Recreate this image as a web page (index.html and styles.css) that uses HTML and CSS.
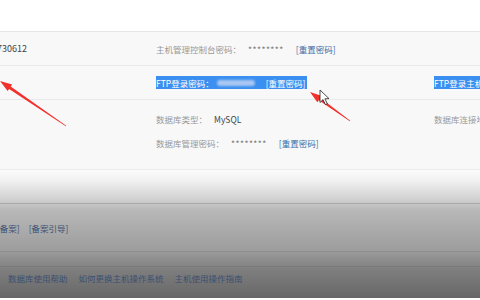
FILE: index.html
```html
<!DOCTYPE html>
<html lang="zh-CN">
<head>
    <meta charset="UTF-8">
    <title>主机管理</title>
    <link rel="stylesheet" href="styles.css">
</head>
<body>
    <div class="top-space"></div>
    <div class="info-table">
        <div class="info-row row-one">
            <div class="cell first"><span class="value cut">730612</span></div>
            <div class="cell">
                <span class="label">主机管理控制台密码：</span><span class="value stars">********</span><a class="link">[重置密码]</a>
            </div>
            <div class="cell"></div>
        </div>
        <div class="info-row row-two">
            <div class="cell first"></div>
            <div class="cell">
                <span class="selected">FTP登录密码：<span class="blurred"></span><span class="sel-link">[重置密码]</span></span>
            </div>
            <div class="cell"><span class="selected">FTP登录主机地址</span></div>
        </div>
        <div class="info-row row-three">
            <div class="cell first"></div>
            <div class="cell stack">
                <div class="line"><span class="label">数据库类型：</span><span class="value">MySQL</span></div>
                <div class="line"><span class="label">数据库管理密码：</span><span class="value stars">********</span><a class="link">[重置密码]</a></div>
            </div>
            <div class="cell stack">
                <div class="line"><span class="label">数据库连接地址：</span></div>
            </div>
        </div>
    </div>
    <div class="footer">
        <div class="foot-gap"></div>
        <div class="foot-row beian">
            <a class="foot-link cut">[备案]</a><a class="foot-link">[备案引导]</a>
        </div>
        <div class="foot-thin"></div>
        <div class="foot-row help">
            <a class="foot-link">数据库使用帮助</a>
            <a class="foot-link">如何更换主机操作系统</a>
            <a class="foot-link">主机使用操作指南</a>
        </div>
    </div>

    <svg class="marks" viewBox="0 0 480 300" width="480" height="300">
        <polygon fill="#f2302c" points="0,81 12.2,84.5 10.7,86.6 66.2,125.7 65.8,126.3 9.1,89 7.6,91.1"/>
        <polygon fill="#f2302c" points="310,92 322.1,95.9 320.6,97.9 350.2,120.7 349.8,121.3 318.8,100.3 317.3,102.3"/>
        <path d="M320 90 L320 102.5 L323 99.6 L325.4 104.6 L327.3 103.7 L324.9 98.8 L329 98.6 Z" fill="#fff" stroke="#222" stroke-width="0.8" stroke-linejoin="round"/>
    </svg>
</body>
</html>
```

FILE: styles.css
```css
body {
    margin: 0;
    width: 480px;
    height: 300px;
    overflow: hidden;
    position: relative;
    background: #fff;
    font-family: "Noto Sans CJK SC", "Liberation Sans", sans-serif;
    font-size: 8.5px;
    color: #666;
}
.top-space {
    height: 31px;
    background: #fff;
}
.info-table {
    background: #f8f8f8;
    border-top: 1px solid #e6e6e6;
    border-bottom: 1px solid #ececec;
}
.info-row {
    display: grid;
    grid-template-columns: 156px 278px 1fr;
    border-bottom: 1px solid #eaeaea;
}
.info-row:last-child {
    border-bottom: none;
}
.row-one {
    height: 33px;
}
.row-two {
    height: 33px;
}
.row-three {
    height: 69px;
}
.cell {
    display: flex;
    align-items: center;
    white-space: nowrap;
    overflow: hidden;
}
.cell.stack {
    flex-direction: column;
    align-items: flex-start;
    justify-content: flex-start;
    padding-top: 13px;
    gap: 12px;
}
.line {
    height: 12px;
    display: flex;
    align-items: center;
}
.label {
    color: #999;
    margin-right: 7px;
}
.value {
    color: #444;
}
.value.cut {
    margin-left: -3px;
    font-size: 9px;
}
.stars {
    color: #777;
    letter-spacing: 0.5px;
    margin-right: 12px;
}
.link {
    color: #3a6ea8;
}
.selected {
    display: inline-flex;
    align-items: center;
    height: 13px;
    background: #3b8ff0;
    color: #fff;
}
.blurred {
    display: inline-block;
    width: 38px;
    height: 6px;
    margin: 0 11px 0 3px;
    background: #a9c7f2;
    border-radius: 3px;
    filter: blur(1px);
}
.sel-link {
    padding-right: 2px;
}
.footer {
    height: 128px;
    background: linear-gradient(to bottom, #fbfbfb 0px, #f2f2f2 10px, #cfcfcf 30px, #b8b8b8 40px, #9d9d9d 80px, #7e7e7e 100px, #676767 128px);
}
.foot-gap {
    height: 33px;
    border-bottom: 1px solid #aaa;
}
.foot-row {
    display: flex;
    align-items: center;
    white-space: nowrap;
}
.beian {
    height: 47px;
    gap: 9px;
    border-bottom: 1px solid #8e8e8e;
}
.foot-thin {
    height: 14px;
    border-bottom: 1px solid #7a7a7a;
}
.help {
    height: 21px;
    padding-left: 8px;
    gap: 11px;
}
.foot-link {
    color: #3a5072;
}
.foot-link.cut {
    margin-left: -3px;
}
.marks {
    position: absolute;
    left: 0;
    top: 0;
    pointer-events: none;
}
```
